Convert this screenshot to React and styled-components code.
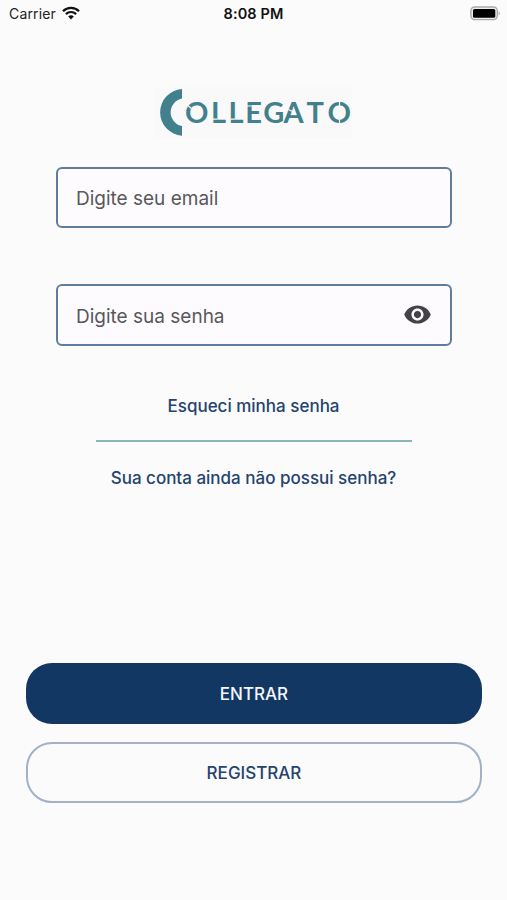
import React, { useState } from 'react'
import styled, { createGlobalStyle } from 'styled-components'
import { MdVisibility, MdVisibilityOff } from 'react-icons/md'

const GlobalStyle = createGlobalStyle`
  * {
    box-sizing: border-box;
  }

  body {
    margin: 0;
    background-color: #fbfbfb;
    font-family: Inter, 'Liberation Sans', sans-serif;
  }
`

const Screen = styled.div`
  display: flex;
  flex-direction: column;
  height: 900px;
  overflow: hidden;
`

const StatusBar = styled.header`
  display: grid;
  grid-template-columns: 1fr auto 1fr;
  align-items: center;
  height: 28px;
  padding: 0 6px 0 9px;
  font-size: 14px;
  color: #222;
`

const Carrier = styled.div`
  display: flex;
  align-items: center;
  gap: 6px;
  margin-top: -2px;
  letter-spacing: 0.15px;
`

const Clock = styled.div`
  margin: -1px 3px 0 0;
  font-size: 14.5px;
  font-weight: 600;
  letter-spacing: 0.1px;
  color: #111;
`

const BatteryWrapper = styled.div`
  display: flex;
  justify-content: flex-end;
  margin-top: -1px;
`

const LogoWrapper = styled.div`
  display: flex;
  justify-content: center;
  margin-top: 57px;
`

const Wordmark = styled.text`
  font-family: Lato, sans-serif;
  font-size: 29px;
  font-weight: 700;
`

const Form = styled.form`
  display: flex;
  flex-direction: column;
  gap: 56px;
  margin: 27px 55px 0 56px;
`

const Field = styled.div`
  display: flex;
  align-items: center;
  height: ${(props) => (props.$tall ? '62px' : '61px')};
  padding: 0 18px;
  border: 2px solid #617d9e;
  border-radius: 6px;
  background-color: #fefbff;
`

const Input = styled.input`
  flex: 1;
  min-width: 0;
  padding: 2px 0 0;
  border: none;
  outline: none;
  background: none;
  font-family: inherit;
  font-size: 19px;
  color: #505054;

  &::placeholder {
    color: #58585b;
    opacity: 1;
  }
`

const EyeButton = styled.button`
  display: flex;
  margin-top: -1px;
  padding: 0;
  border: none;
  background: none;
  color: #434248;
  cursor: pointer;
`

const Links = styled.nav`
  display: flex;
  flex-direction: column;
  align-items: center;
  margin-top: 49px;
`

const TextLink = styled.a`
  font-size: 17px;
  font-weight: 500;
  line-height: 22px;
  color: #24436e;
  text-decoration: none;
`

const Divider = styled.hr`
  width: 316px;
  height: 2px;
  margin: 23px 0 25px;
  border: none;
  background-color: #8bb6bd;
`

const Actions = styled.div`
  display: flex;
  flex-direction: column;
  gap: 18px;
  margin: 174px 25px 0 26px;
`

const Button = styled.button`
  height: 61px;
  padding: 0;
  border: ${(props) => (props.$outlined ? '2px solid #a3b1c6' : 'none')};
  border-radius: 26px;
  background-color: ${(props) => (props.$outlined ? 'transparent' : '#133763')};
  color: ${(props) => (props.$outlined ? '#24436e' : '#f3f6fa')};
  font-family: inherit;
  font-size: 17px;
  font-weight: 500;
  text-transform: uppercase;
  cursor: pointer;
`

const WifiIcon = () => (
  <svg width='18' height='14' viewBox='0 0 18 14' fill='none' stroke='#111'>
    <path d='M1 5.2a11.3 11.3 0 0 1 16 0' strokeWidth='2.3' />
    <path d='M3.9 8.1a7.2 7.2 0 0 1 10.2 0' strokeWidth='2.2' />
    <path d='M9 13.4 6.2 10.5a4 4 0 0 1 5.6 0Z' fill='#111' stroke='none' />
  </svg>
)

const BatteryIcon = () => (
  <svg width='31' height='15' viewBox='0 0 31 15'>
    <rect x='0.9' y='1' width='26.4' height='12.6' rx='3.8' fill='#eee' stroke='#aaa' strokeWidth='1.4' />
    <rect x='3' y='3' width='22.3' height='8.8' rx='1.6' fill='#000' />
    <path d='M28.6 5.2q2.6 2.2 0 4.4Z' fill='#aaa' />
  </svg>
)

const Logo = () => (
  <svg width='197' height='55' viewBox='155 85 197 55'>
    <rect x='155' y='87' width='197' height='51' fill='#f9f9f9' />
    <g fill='#42808d'>
      <path d='M182 89a23.4 23.4 0 0 0 0 46.7v-9.6a14 14 0 0 1 0-27.5Z' />
      <Wordmark x='185 211 228.5 245.3 263.2 283.6 306.5 327.5' y='123'>
        OLLEGATO
      </Wordmark>
    </g>
    {/* stencil cuts */}
    <path
      d='M186.5 104.5l5 4M213 119.2h4.4M230.5 119.2h4.4M247 106h4.6M280.5 108.5l4-3.5M288.5 109.5l5 2.5M339.5 100v6M339.5 119v6'
      fill='none'
      stroke='#f9f9f9'
      strokeWidth='1.2'
    />
  </svg>
)

const App = () => {
  const [showPassword, setShowPassword] = useState(false)

  const toggleShowPassword = () => {
    setShowPassword((prevState) => !prevState)
  }

  return (
    <>
      <GlobalStyle />
      <Screen>
        <StatusBar>
          <Carrier>
            Carrier <WifiIcon />
          </Carrier>
          <Clock>8:08 PM</Clock>
          <BatteryWrapper>
            <BatteryIcon />
          </BatteryWrapper>
        </StatusBar>
        <LogoWrapper>
          <Logo />
        </LogoWrapper>
        <Form>
          <Field>
            <Input type='text' placeholder='Digite seu email' />
          </Field>
          <Field $tall>
            <Input
              type={showPassword ? 'text' : 'password'}
              placeholder='Digite sua senha'
            />
            <EyeButton type='button' onClick={toggleShowPassword}>
              {showPassword ? (
                <MdVisibilityOff size={29} />
              ) : (
                <MdVisibility size={29} />
              )}
            </EyeButton>
          </Field>
        </Form>
        <Links>
          <TextLink href='#'>Esqueci minha senha</TextLink>
          <Divider />
          <TextLink href='#'>Sua conta ainda não possui senha?</TextLink>
        </Links>
        <Actions>
          <Button>Entrar</Button>
          <Button $outlined>Registrar</Button>
        </Actions>
      </Screen>
    </>
  )
}

export default App
